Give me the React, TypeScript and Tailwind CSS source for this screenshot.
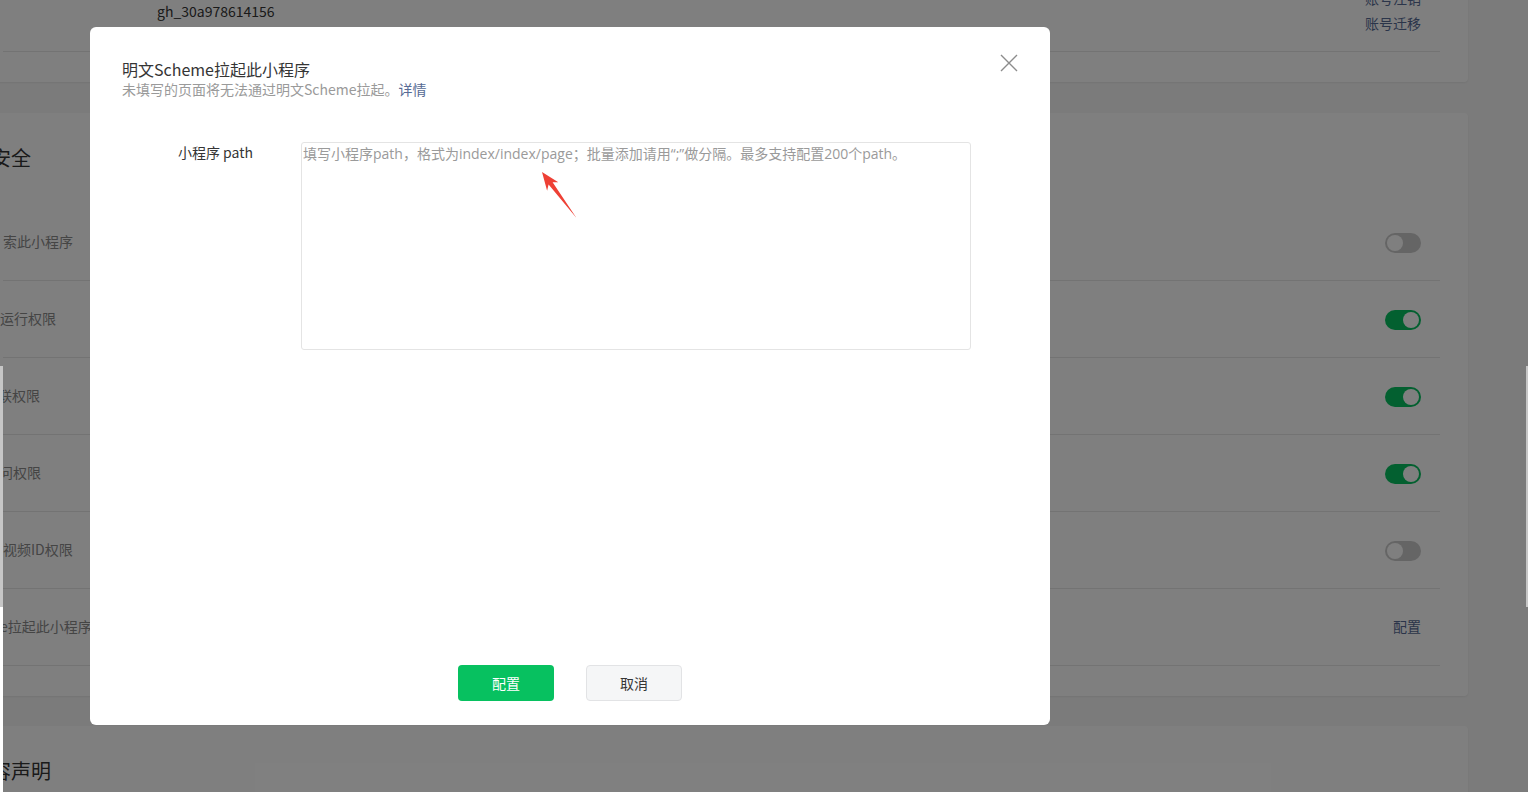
import type { ReactNode } from 'react'

type Row = { label: string; kind: 'on' | 'off' | 'link'; shift?: string }

const rows: Row[] = [
  { label: '索此小程序', kind: 'off' },
  { label: '运行权限', kind: 'on', shift: '-ml-[3px]' },
  { label: '联权限', kind: 'on', shift: '-ml-[5px]' },
  { label: '问权限', kind: 'on', shift: '-ml-[4px]' },
  { label: '视频ID权限', kind: 'off' },
  { label: 'e拉起此小程序', kind: 'link', shift: '-ml-[3px]' },
]

function Toggle({ on }: { on: boolean }) {
  return (
    <div className={`mt-[2px] w-9 h-5 rounded-full p-[2px] flex ${on ? 'bg-[#07c160] justify-end' : 'bg-[#cbcbcb] justify-start'}`}>
      <div className="w-4 h-4 rounded-full bg-white" />
    </div>
  )
}

function Card({ children, className = '' }: { children: ReactNode; className?: string }) {
  return (
    <div className={`-ml-[40px] pl-[43px] pr-[28px] bg-white rounded-[4px] shadow-[0_1px_2px_rgba(0,0,0,0.06)] ${className}`}>
      {children}
    </div>
  )
}

export default function App() {
  return (
    <div className="relative w-[1528px] h-[792px] overflow-hidden bg-[#f6f6f6] font-['Noto_Sans_CJK_SC','Noto_Sans',sans-serif] text-[#353535]">
      {/* page under the mask */}
      <div className="flex flex-col pr-[60px]">
        <Card className="-mt-[25px] pb-[30px]">
          <div className="h-[77px] border-b border-[#e7e7e7] flex items-center justify-between pr-[19px]">
            <span className="ml-[154px] -mt-[4px] text-sm leading-6 text-[#353535]">gh_30a978614156</span>
            <div className="flex flex-col -mt-[5px] text-sm text-[#576b95]">
              <span className="leading-[25px]">账号注销</span>
              <span className="leading-[25px]">账号迁移</span>
            </div>
          </div>
        </Card>

        <Card className="mt-[31px] pt-[31px] pb-[30px]">
          <div className="text-xl leading-7 -ml-[12px] mb-[32px] text-[#353535]">安全</div>
          {rows.map((r) => (
            <div key={r.label} className="h-[77px] border-b border-[#e7e7e7] flex items-center justify-between pr-[19px]">
              <span className={`-mt-[2px] text-sm text-[#8a8a8a] ${r.shift ?? ''}`}>{r.label}</span>
              {r.kind === 'link' ? (
                <span className="-mt-[2px] text-sm text-[#576b95]">配置</span>
              ) : (
                <Toggle on={r.kind === 'on'} />
              )}
            </div>
          ))}
        </Card>

        <Card className="mt-[30px] pt-[31px] pb-[30px]">
          <div className="text-xl leading-7 -ml-[12px] text-[#353535]">容声明</div>
        </Card>
      </div>

      {/* mask + dialog */}
      <div className="absolute inset-0 bg-black/50 pl-[90px] pt-[27px]">
        <div className="relative w-[960px] h-[698px] bg-white rounded-[6px] flex flex-col px-8 pt-[32px] pb-6">
          <div className="text-base leading-5 text-[#353535]">明文Scheme拉起此小程序</div>
          <div className="text-sm leading-5 text-[#9a9a9a]">
            未填写的页面将无法通过明文Scheme拉起。<span className="text-[#576b95]">详情</span>
          </div>

          <button className="absolute top-[27px] right-[32px] w-[18px] h-[18px]">
            <svg viewBox="0 0 18 18" className="w-[18px] h-[18px]" fill="none" stroke="#8c8c8c" strokeWidth="1.4">
              <path d="M1 1L17 17M17 1L1 17" />
            </svg>
          </button>

          <div className="flex mt-[43px]">
            <label className="w-[131px] text-right text-sm leading-[20px] text-[#353535]">小程序 path</label>
            <textarea
              className="ml-12 w-[670px] h-[208px] border border-[#e4e4e4] rounded-[3px] px-px pt-px text-sm leading-5 resize-none outline-none font-['Open_Sans','Noto_Sans_CJK_SC',sans-serif] placeholder:text-[#9a9a9a]"
              placeholder="填写小程序path，格式为index/index/page；批量添加请用“;”做分隔。最多支持配置200个path。"
            />
          </div>

          <svg className="absolute left-[445px] top-[140px] w-[50px] h-[56px]" viewBox="535 167 50 56">
            <polygon
              points="542,172 558.3,182.3 552.6,182.2 576.5,218 548.6,184.6 547.1,190.7"
              fill="#ee4035"
            />
          </svg>

          <div className="mt-auto flex justify-center gap-8">
            <button className="w-24 h-9 rounded-[4px] bg-[#07c160] text-white text-sm">配置</button>
            <button className="w-24 h-9 rounded-[4px] bg-[#f5f6f7] border border-[#e2e3e5] text-sm text-[#353535]">取消</button>
          </div>
        </div>
      </div>

      {/* window edge strips from the capture */}
      <div className="absolute left-0 top-[366px] w-[3px] h-[241px] bg-[#c6c6c6]" />
      <div className="absolute left-0 top-[607px] w-[3px] h-[185px] bg-white" />
      <div className="absolute right-0 top-[366px] w-[2px] h-[241px] bg-[#c6c6c6]" />
    </div>
  )
}
